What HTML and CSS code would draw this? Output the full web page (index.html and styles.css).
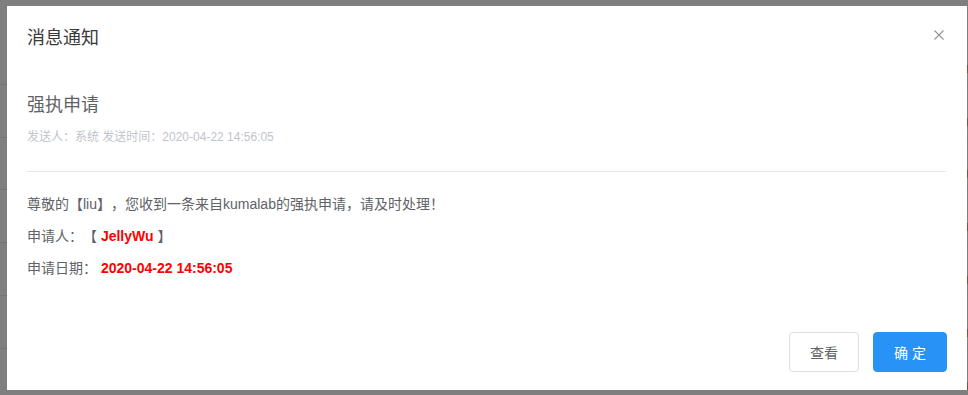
FILE: index.html
```html
<!DOCTYPE html>
<html lang="zh-CN">
<head>
<meta charset="utf-8">
<title>消息通知</title>
<link rel="stylesheet" href="styles.css">
</head>
<body>
<div class="page">
  <div class="row"><span class="row-tag"></span></div>
  <div class="row"><span class="row-tag"></span></div>
  <div class="row"><span class="row-tag"></span></div>
  <div class="row"><span class="row-tag"></span></div>
  <div class="row"><span class="row-tag"></span></div>
  <div class="row"><span class="row-tag"></span></div>
  <div class="row"><span class="row-tag"></span></div>
</div>
<div class="overlay">
  <div class="modal">
    <div class="modal-header">
      <span class="modal-title">消息通知</span>
      <button class="close" aria-label="关闭">
        <svg width="10" height="10" viewBox="0 0 10 10"><path d="M0.5 0.5 L9.5 9.5 M9.5 0.5 L0.5 9.5" stroke="#909399" stroke-width="1.1" fill="none"/></svg>
      </button>
    </div>
    <div class="modal-body">
      <h2 class="msg-title">强执申请</h2>
      <div class="msg-meta">发送人：系统 发送时间：<span class="meta-date">2020-04-22 14:56:05</span></div>
      <div class="divider"></div>
      <p class="line">尊敬的【liu】，您收到一条来自kumalab的强执申请，请及时处理！</p>
      <p class="line">申请人：【 <b class="red">JellyWu</b> 】</p>
      <p class="line">申请日期： <b class="red date">2020-04-22 14:56:05</b></p>
    </div>
    <div class="modal-footer">
      <button class="btn btn-default">查看</button>
      <button class="btn btn-primary">确 定</button>
    </div>
  </div>
</div>
</body>
</html>
```
FILE: styles.css
```css
* { box-sizing: border-box; }
html, body { margin: 0; padding: 0; }
body {
  width: 968px;
  height: 395px;
  overflow: hidden;
  background: #ffffff;
  font-family: "Liberation Sans", "Noto Sans CJK SC", sans-serif;
  text-spacing-trim: space-all;
}
.page {
  padding-top: 32px;
}
.row {
  height: 52.8px;
  border-bottom: 1px solid #e6e6e6;
  display: flex;
  align-items: center;
  justify-content: flex-end;
}
.row-tag {
  width: 2px;
  height: 8px;
  margin-top: 22px;
  background: #d9b27a;
}
.overlay {
  position: fixed;
  inset: 0;
  background: rgba(0, 0, 0, 0.5);
  padding: 6px 1px 5px 7px;
}
.modal {
  width: 960px;
  height: 384px;
  background: #ffffff;
  display: flex;
  flex-direction: column;
}
.modal-header {
  padding: 20px 20px 0 20px;
  display: flex;
  align-items: center;
  justify-content: space-between;
}
.modal-title {
  font-size: 18px;
  line-height: 24px;
  color: #3a3a3a;
}
.close {
  border: 0;
  background: none;
  padding: 0;
  margin: -7px 3px 0 0;
  width: 10px;
  height: 10px;
  display: flex;
}
.modal-body {
  padding: 0 20px;
}
.msg-title {
  margin: 43px 0 0 0;
  font-size: 18px;
  line-height: 24px;
  font-weight: normal;
  color: #606266;
}
.msg-meta {
  margin-top: 11px;
  font-size: 12px;
  line-height: 18px;
  color: #c0c4cc;
}
.divider {
  margin-top: 25px;
  height: 1px;
  background: #e4e7ed;
  margin-right: 1px;
}
.line {
  margin: 12px 0 0 0;
  font-size: 14px;
  line-height: 20px;
  color: #606266;
}
.divider + .line {
  margin-top: 22px;
}
.red {
  color: #ff0000;
  font-weight: bold;
}
.modal-footer {
  margin-top: auto;
  padding: 0 20px 18px 20px;
  display: flex;
  justify-content: flex-end;
  gap: 14px;
}
.btn {
  height: 40px;
  border-radius: 4px;
  font-size: 14px;
  font-family: "Liberation Sans", "Noto Sans CJK SC", sans-serif;
  cursor: pointer;
}
.btn-default {
  width: 70px;
  background: #ffffff;
  border: 1px solid #dcdfe6;
  color: #606266;
}
.btn-primary {
  width: 74px;
  background: #2892f7;
  border: 1px solid #2892f7;
  color: #ffffff;
}
```
